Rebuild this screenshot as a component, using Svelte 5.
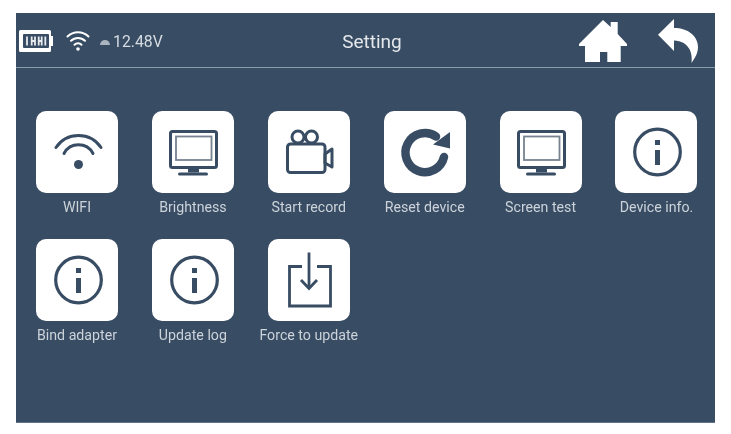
<script>
  const items = [
    { label: "WIFI", icon: "wifi" },
    { label: "Brightness", icon: "monitor" },
    { label: "Start record", icon: "camera" },
    { label: "Reset device", icon: "reset" },
    { label: "Screen test", icon: "monitor" },
    { label: "Device info.", icon: "info" },
    { label: "Bind adapter", icon: "info" },
    { label: "Update log", icon: "info" },
    { label: "Force to update", icon: "download" },
  ];
</script>

<div class="screen">
  <header class="topbar">
    <div class="status">
      <svg class="battery" viewBox="0 0 34 22" width="34" height="22">
        <path d="M1.500 0h29A1.500 1.500 0 0 1 32 1.500V6h2v10h-2v4.500a1.500 1.500 0 0 1-1.500 1.500h-29A1.500 1.500 0 0 1 0 20.500v-19A1.500 1.500 0 0 1 1.500 0z" fill="#fff" />
        <rect x="4" y="4" width="26" height="14" rx="1" fill="#384c63" />
        <path d="M8 6.500v9M12.700 6.500v9M16 6.500v9M12.700 11H16M19.700 6.500v9M22.700 6.500v9M19.700 11h3M26.300 6.500v9" stroke="#e8ecef" stroke-width="1.800" fill="none" />
      </svg>
      <svg class="signal" viewBox="0 0 24 20" width="24" height="20">
        <g fill="none" stroke="#fff" stroke-width="2" stroke-linecap="round">
          <path d="M1.500 5.500a15 15 0 0 1 21 0" />
          <path d="M5 9.800a10 10 0 0 1 14 0" />
          <path d="M8.500 13.800a5 5 0 0 1 7 0" />
        </g>
        <circle cx="12" cy="18" r="1.800" fill="#fff" />
      </svg>
      <svg class="cloud" viewBox="0 0 10 7" width="10" height="7">
        <path d="M0 7a5 5 0 0 1 10 0z" fill="#aab5c0" />
      </svg>
      <span class="volt">12.48V</span>
    </div>
    <div class="title">Setting</div>
    <div class="actions">
      <svg viewBox="0 0 49 42" width="49" height="42">
        <path d="M25 0L32.700 7V2H39.700V14L49 24V26H42.700V42H29.300V32H22V42H7V26H1V24z" fill="#fff" />
      </svg>
      <svg viewBox="0 0 40 44" width="40" height="44">
        <path d="M0 15.700L16 0V9C30 9 40 17 40 28C40 34 37 39 33.500 44C35 34 31 22 16 21.500V32z" fill="#fff" />
      </svg>
    </div>
  </header>

  <div class="grid">
    {#each items as item}
      <div class="cell">
        <div class="tile">
          <svg viewBox="0 0 82 82" width="82" height="82">
            {#if item.icon === "wifi"}
              <g fill="none" stroke="#384c63" stroke-width="3" stroke-linecap="round">
                <path d="M20 36.500a27 27 0 0 1 45 0" />
                <path d="M28 42.500a16.500 16.500 0 0 1 29 0" />
              </g>
              <circle cx="42.500" cy="53.500" r="4.500" fill="#384c63" />
            {:else if item.icon === "monitor"}
              <rect x="18.500" y="20.500" width="46" height="36" rx="2" fill="none" stroke="#384c63" stroke-width="3" />
              <rect x="24" y="25.500" width="35.500" height="23.500" fill="none" stroke="#76838f" stroke-width="1.800" />
              <path d="M36 57h11v4.500H36z" fill="#384c63" />
              <rect x="26" y="61.500" width="30" height="3" rx="1.500" fill="#384c63" />
            {:else if item.icon === "camera"}
              <g fill="none" stroke="#384c63" stroke-width="3" stroke-linejoin="round">
                <rect x="19.500" y="33" width="37.500" height="28.500" rx="3" />
                <circle cx="30" cy="26" r="6" />
                <circle cx="43.500" cy="26" r="6" />
                <path d="M57 43l7-5v18l-7-4z" />
              </g>
            {:else if item.icon === "reset"}
              <path d="M60 46A19.500 19.500 0 1 1 52 25.500" fill="none" stroke="#384c63" stroke-width="8.500" stroke-linecap="round" />
              <path d="M66 21v16.500L49 33.500z" fill="#384c63" />
            {:else if item.icon === "info"}
              <circle cx="42.500" cy="41" r="22.800" fill="none" stroke="#384c63" stroke-width="3.200" />
              <rect x="40" y="29" width="5" height="5" fill="#384c63" />
              <rect x="40" y="39" width="5" height="15" fill="#384c63" />
            {:else}
              <g fill="none" stroke="#384c63" stroke-width="2.800">
                <path d="M34 27.500H21.500V67h41V27.500H49" />
                <path d="M41 13.500V49" />
                <path d="M33 41l8 8.500 8-8.500" />
              </g>
            {/if}
          </svg>
        </div>
        <div class="label">{item.label}</div>
      </div>
    {/each}
  </div>
</div>

<style>
  :global(body) {
    margin: 0;
    background: #fff;
  }

  .screen {
    box-sizing: border-box;
    width: 699px;
    height: 410px;
    margin: 13px 0 0 16px;
    background: #384c63;
    border-bottom: 1.500px solid #61738a;
    font-family: Roboto, "Liberation Sans", sans-serif;
    filter: blur(0.35px);
  }

  .topbar {
    box-sizing: border-box;
    display: flex;
    align-items: center;
    height: 55px;
    padding: 2px 17px 0 3px;
    border-bottom: 1.500px solid #8c9bab;
  }

  .status {
    display: flex;
    align-items: center;
    width: 147px;
    color: #d6dce2;
  }

  .signal {
    margin-left: 13px;
  }

  .cloud {
    margin-left: 10px;
  }

  .volt {
    margin-left: 3px;
    font-size: 15.800px;
  }

  .title {
    flex: 1;
    text-align: center;
    color: #e4e8ec;
    font-size: 19px;
  }

  .actions {
    display: flex;
    align-items: center;
    gap: 31px;
  }

  .grid {
    display: grid;
    grid-template-columns: repeat(6, 82px);
    grid-auto-rows: 128px;
    column-gap: 33.900px;
    padding: 42.500px 0 0 20px;
  }

  .cell {
    display: flex;
    flex-direction: column;
    align-items: center;
  }

  .tile {
    width: 82px;
    height: 82px;
    border-radius: 10px;
    background: #fff;
  }

  .tile svg {
    display: block;
  }

  .label {
    margin-top: 7px;
    color: #ccd3da;
    font-size: 14.200px;
    line-height: 15px;
    white-space: nowrap;
  }
</style>
